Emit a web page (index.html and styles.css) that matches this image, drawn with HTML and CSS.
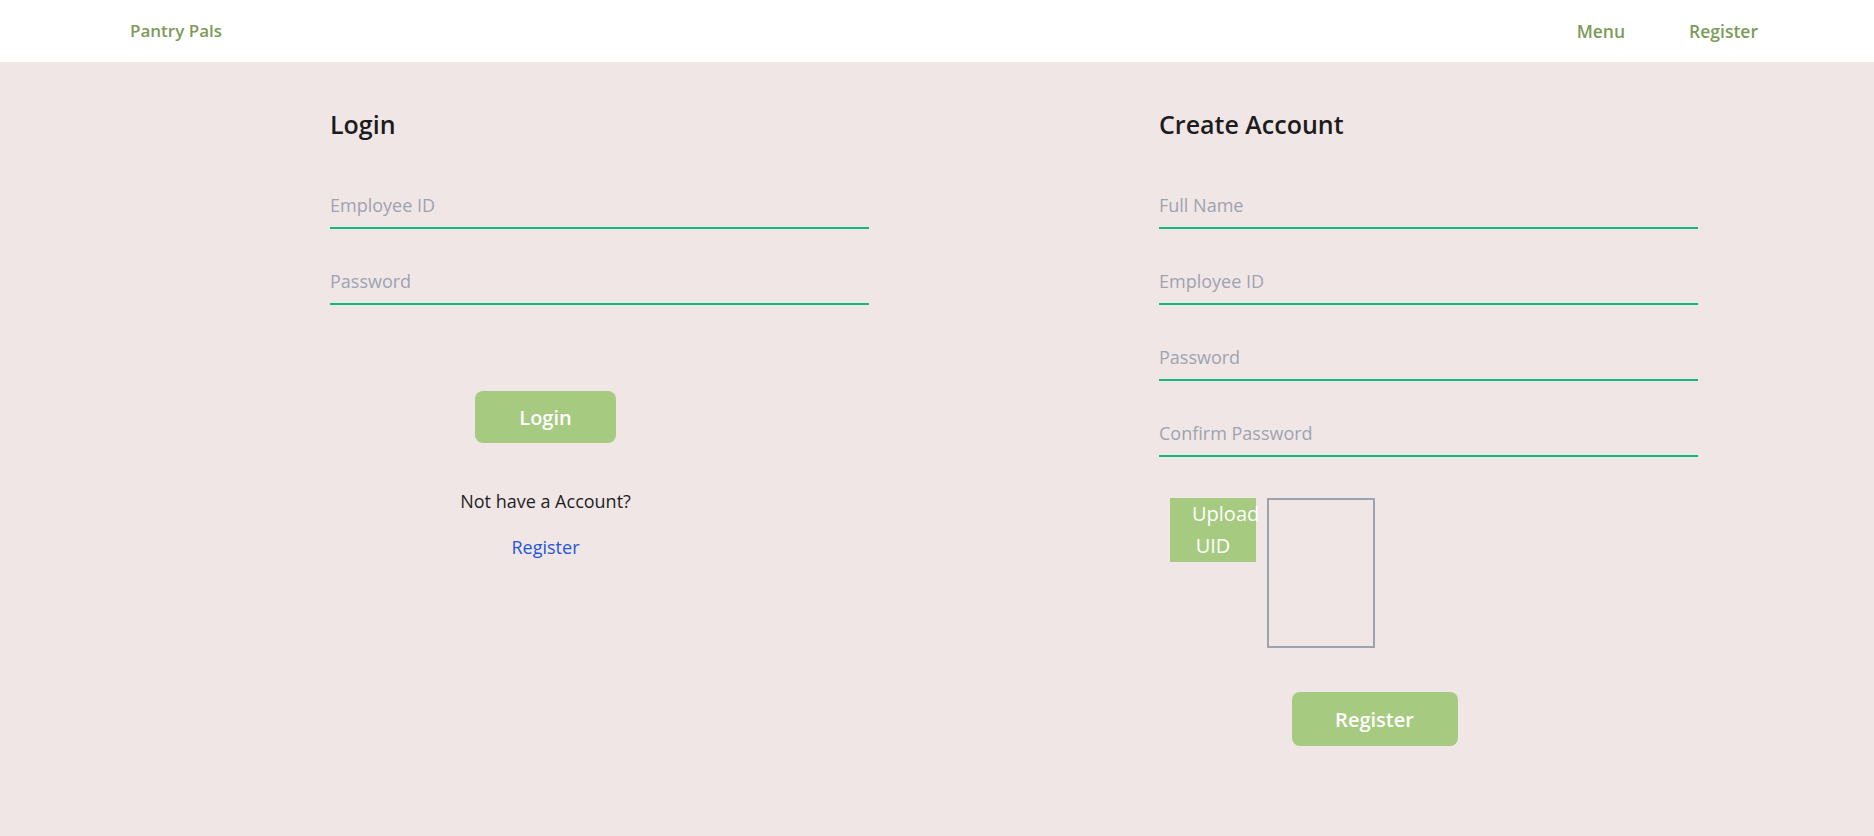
FILE: index.html
```html
<!DOCTYPE html>
<html lang="en">
<head>
<meta charset="utf-8">
<title>Pantry Pals</title>
<link rel="stylesheet" href="styles.css">
</head>
<body>
<header class="topbar">
  <a class="brand" href="#">Pantry Pals</a>
  <nav class="nav">
    <a class="nav-link" href="#">Menu</a>
    <a class="nav-link" href="#">Register</a>
  </nav>
</header>
<main class="page">
  <section class="panel">
    <h2 class="panel-title">Login</h2>
    <form class="fields">
      <input class="field" type="text" placeholder="Employee ID">
      <input class="field" type="password" placeholder="Password">
    </form>
    <div class="actions actions-login">
      <button class="btn btn-login" type="button">Login</button>
      <p class="hint">Not have a Account?</p>
      <a class="link" href="#">Register</a>
    </div>
  </section>
  <section class="panel">
    <h2 class="panel-title">Create Account</h2>
    <form class="fields">
      <input class="field" type="text" placeholder="Full Name">
      <input class="field" type="text" placeholder="Employee ID">
      <input class="field" type="password" placeholder="Password">
      <input class="field" type="password" placeholder="Confirm Password">
    </form>
    <div class="upload-row">
      <label class="upload">Upload UID<input class="upload-input" type="file"></label>
      <div class="preview"></div>
    </div>
    <div class="actions actions-register">
      <button class="btn btn-register" type="button">Register</button>
    </div>
  </section>
</main>
</body>
</html>
```
FILE: styles.css
```css
* { box-sizing: border-box; }

html, body {
  margin: 0;
  padding: 0;
}

body {
  background: #f0e6e6;
  font-family: "Open Sans", "Noto Sans", sans-serif;
  color: #1f1f1f;
  min-height: 836px;
}

.topbar {
  height: 62px;
  background: #ffffff;
  display: flex;
  align-items: center;
  justify-content: space-between;
  padding: 0 116px 0 130px;
}

.brand,
.nav-link {
  color: #7d9b5a;
  font-weight: 600;
  font-size: 17px;
  text-decoration: none;
  line-height: 24px;
}

.nav-link {
  font-size: 17.5px;
}

.nav {
  display: flex;
  gap: 64px;
}

.page {
  display: grid;
  grid-template-columns: 539px 539px;
  column-gap: 290px;
  padding: 44px 0 0 330px;
}

.panel {
  display: flex;
  flex-direction: column;
}

.panel-title {
  margin: 0;
  font-size: 25px;
  font-weight: 600;
  line-height: 36px;
  color: #1c1c1c;
}

.fields {
  margin: 41px 0 0;
  display: flex;
  flex-direction: column;
  gap: 30px;
}

.field {
  display: block;
  width: 539px;
  box-sizing: content-box;
  padding: 8px 0;
  height: 28px;
  line-height: 28px;
  font-family: inherit;
  font-size: 18px;
  color: #1f1f1f;
  background: transparent;
  border: none;
  border-bottom: 2px solid #10b981;
  outline: none;
}

.field::placeholder {
  color: #9ea3b0;
}

.actions {
  width: 431px;
  display: flex;
  flex-direction: column;
  align-items: center;
}

.actions-login {
  margin-top: 86px;
}

.btn {
  border: none;
  background: #a6cb80;
  color: #ffffff;
  font-family: inherit;
  font-weight: 600;
  font-size: 20px;
  border-radius: 8px;
  cursor: pointer;
}

.btn-login {
  width: 141px;
  height: 52px;
}

.hint {
  margin: 44px 0 0;
  font-size: 18px;
  line-height: 28px;
  color: #1f1f1f;
}

.link {
  margin-top: 18px;
  font-size: 18px;
  line-height: 28px;
  color: #2556d6;
  text-decoration: none;
}

.upload-row {
  margin: 41px 0 0 11px;
  display: flex;
  align-items: flex-start;
  gap: 11px;
}

.upload {
  width: 86px;
  height: 64px;
  padding: 0 22px;
  background: #a6cb80;
  color: #ffffff;
  font-size: 20px;
  line-height: 32px;
  text-align: center;
  cursor: pointer;
}

.upload-input {
  display: none;
}

.preview {
  width: 108px;
  height: 150px;
  border: 2px solid #9ca3af;
}

.actions-register {
  margin-top: 44px;
}

.btn-register {
  width: 166px;
  height: 54px;
}
```
